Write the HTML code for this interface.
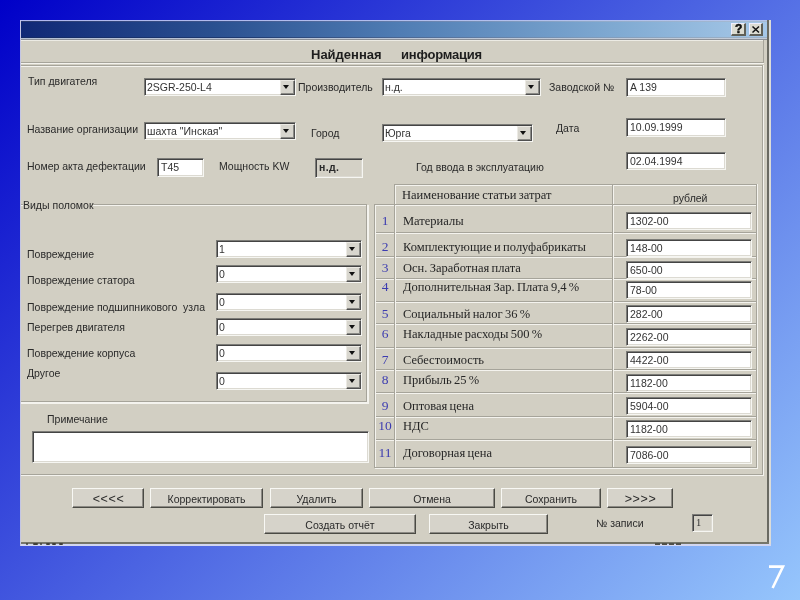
<!DOCTYPE html><html><head><meta charset="utf-8"><style>
*{margin:0;padding:0;box-sizing:border-box}
html,body{width:800px;height:600px;overflow:hidden}
body{position:relative;will-change:transform;background:linear-gradient(135deg,rgb(0,0,200),rgb(150,198,252));font-family:"Liberation Sans",sans-serif}
.bx{position:absolute}
.t{position:absolute;font-size:10.5px;line-height:12px;color:#2a2a2a;white-space:nowrap}
.s{position:absolute;font-family:"Liberation Serif",serif;font-size:12.5px;line-height:14px;color:#262626;white-space:nowrap;word-spacing:-0.8px}
.n{position:absolute;font-family:"Liberation Serif",serif;font-size:13.5px;line-height:14px;color:#3c3cb0;white-space:nowrap;text-align:center}
.tb{position:absolute;background:#fff;border-top:1px solid #7c7c78;border-left:1px solid #7c7c78;border-right:1px solid #f6f6f2;border-bottom:1px solid #f6f6f2;box-shadow:inset 1px 1px 0 #444, inset -1px -1px 0 #dcdad2}
.tb span{position:absolute;font-size:10.5px;line-height:12px;color:#333;white-space:nowrap}
.tb i{position:absolute;right:0;top:1px;bottom:0;width:15px;background:#d8d6ce;border-top:1px solid #eceae4;border-left:1px solid #eceae4;border-right:1px solid #505050;border-bottom:1px solid #505050;box-shadow:inset -1px -1px 0 #8a8a86}
.tb i:after{content:"";position:absolute;left:2px;top:4px;border-left:3.5px solid transparent;border-right:3.5px solid transparent;border-top:4px solid #111}
.btn{position:absolute;background:#d6d3ca;border-top:1px solid #f8f8f4;border-left:1px solid #f8f8f4;border-right:1px solid #4a4a44;border-bottom:1px solid #4a4a44;box-shadow:inset -1px -1px 0 #8c8a84}
.btn span{position:absolute;text-align:center;font-size:10.5px;line-height:12px;color:#2a2a2a;white-space:nowrap}
</style></head><body>
<div id="w" style="position:absolute;left:0;top:0;width:800px;height:600px">
<div class="bx" style="left:20px;top:20px;width:747px;height:522px;background:#d2cfc3;"></div>
<div class="bx" style="left:20px;top:20px;width:747px;height:1px;background:linear-gradient(90deg,#b0b8f0,#b4c4ec);"></div>
<div class="bx" style="left:20px;top:21px;width:747px;height:1px;background:linear-gradient(90deg,#2a3a70,#405890 30%,#8ea8c8 75%,#a8bcd4);"></div>
<div class="bx" style="left:20px;top:22px;width:747px;height:15px;background:linear-gradient(90deg,rgb(16,40,118) 0%,rgb(42,80,144) 26%,rgb(80,125,180) 51%,rgb(128,170,210) 80%,rgb(166,200,232) 100%);"></div>
<div class="bx" style="left:20px;top:37px;width:747px;height:1px;background:linear-gradient(90deg,#142a64,#1e3a70 30%,#7c98b8 75%,#a0b4c8);"></div>
<div class="bx" style="left:20px;top:38px;width:747px;height:1px;background:linear-gradient(90deg,#b4c0d4,#c4ccd8);"></div>
<div class="bx" style="left:20px;top:39px;width:747px;height:1px;background:#8c9098;"></div>
<div class="tbtn" style="position:absolute;left:731px;top:23px;width:15px;height:13px;background:#dcdcd2;border-right:2px solid #606058;border-bottom:2px solid #606058;border-top:1px solid #eef;border-left:1px solid #eef;"></div>
<div class="tbtn" style="position:absolute;left:749px;top:23px;width:14px;height:13px;background:#dcdcd2;border-right:2px solid #606058;border-bottom:2px solid #606058;border-top:1px solid #eef;border-left:1px solid #eef;"></div>
<div style="position:absolute;left:735px;top:23px;font-size:12px;line-height:12px;font-weight:bold;color:#111;-webkit-text-stroke:0.5px #111;">?</div>
<svg style="position:absolute;left:0;top:0" width="800" height="600"><path d="M752.5 26.5 L759 32.5 M759 26.5 L752.5 32.5" stroke="#111" stroke-width="1.5" fill="none"/></svg>
<div class="bx" style="left:767px;top:20px;width:2px;height:524px;background:#6a6a62;"></div>
<div class="bx" style="left:769px;top:20px;width:2px;height:526px;background:#dcdcd8;"></div>
<div class="bx" style="left:20px;top:40px;width:744px;height:1px;background:#ecebe4;"></div>
<div class="bx" style="left:20px;top:62px;width:743px;height:1px;background:#a6a49a;"></div>
<div class="bx" style="left:20px;top:63px;width:744px;height:1px;background:#f4f3ee;"></div>
<div class="bx" style="left:763px;top:40px;width:1px;height:23px;background:#a6a49a;"></div>
<div class="bx" style="left:20px;top:65px;width:743px;height:1px;background:#a6a49a;"></div>
<div class="bx" style="left:20px;top:66px;width:743px;height:1px;background:#f4f3ee;"></div>
<div class="bx" style="left:762px;top:65px;width:1px;height:410px;background:#a6a49a;"></div>
<div class="bx" style="left:763px;top:65px;width:1px;height:410px;background:#f4f3ee;"></div>
<div style="position:absolute;left:311px;top:48px;font-size:13px;font-weight:bold;line-height:14px;color:#1e1e1e;white-space:nowrap;letter-spacing:0px">Найденная</div>
<div style="position:absolute;left:401px;top:48px;font-size:13px;font-weight:bold;line-height:14px;color:#1e1e1e;white-space:nowrap;letter-spacing:-0.2px">информация</div>
<div class="t" style="left:28px;top:75px;">Тип двигателя</div>
<div class="tb" style="left:144px;top:78px;width:152px;height:18px;"><span style="left:2px;top:2px">2SGR-250-L4</span><i></i></div>
<div class="t" style="left:298px;top:81px;">Производитель</div>
<div class="tb" style="left:382px;top:78px;width:159px;height:18px;"><span style="left:2px;top:2px">н.д.</span><i></i></div>
<div class="t" style="left:549px;top:81px;">Заводской №</div>
<div class="tb" style="left:626px;top:78px;width:100px;height:19px;"><span style="left:3px;top:2px;">A 139</span></div>
<div class="t" style="left:27px;top:123px;">Название организации</div>
<div class="tb" style="left:144px;top:122px;width:152px;height:18px;"><span style="left:2px;top:2px">шахта "Инская"</span><i></i></div>
<div class="t" style="left:311px;top:127px;">Город</div>
<div class="tb" style="left:382px;top:124px;width:151px;height:18px;"><span style="left:2px;top:2px">Юрга</span><i></i></div>
<div class="t" style="left:556px;top:122px;">Дата</div>
<div class="tb" style="left:626px;top:118px;width:100px;height:19px;"><span style="left:3px;top:2px;">10.09.1999</span></div>
<div class="t" style="left:27px;top:160px;">Номер акта дефектации</div>
<div class="tb" style="left:157px;top:158px;width:47px;height:19px;"><span style="left:3px;top:2px;">T45</span></div>
<div class="t" style="left:219px;top:160px;">Мощность KW</div>
<div class="tb" style="left:315px;top:158px;width:48px;height:20px;background:#d4d1c6;"><span style="left:3px;top:2px;font-weight:bold;letter-spacing:0.4px;color:#2a2a2a">н.д.</span></div>
<div class="t" style="left:416px;top:161px;">Год ввода в эксплуатацию</div>
<div class="tb" style="left:626px;top:152px;width:100px;height:18px;"><span style="left:3px;top:2px;">02.04.1994</span></div>
<div class="t" style="left:23px;top:199px;">Виды поломок</div>
<div class="bx" style="left:93px;top:204px;width:273px;height:1px;background:#a6a49a;"></div>
<div class="bx" style="left:93px;top:205px;width:274px;height:1px;background:#f4f3ee;"></div>
<div class="bx" style="left:20px;top:204px;width:3px;height:1px;background:#a6a49a;"></div>
<div class="bx" style="left:20px;top:205px;width:3px;height:1px;background:#f4f3ee;"></div>
<div class="bx" style="left:366px;top:204px;width:1px;height:198px;background:#a6a49a;"></div>
<div class="bx" style="left:367px;top:205px;width:2px;height:197px;background:#f4f3ee;"></div>
<div class="bx" style="left:20px;top:401px;width:347px;height:1px;background:#a6a49a;"></div>
<div class="bx" style="left:20px;top:402px;width:349px;height:2px;background:#f4f3ee;"></div>
<div class="t" style="left:27px;top:248px;">Повреждение</div>
<div class="tb" style="left:216px;top:240px;width:146px;height:18px;"><span style="left:2px;top:2px">1</span><i></i></div>
<div class="t" style="left:27px;top:274px;">Повреждение статора</div>
<div class="tb" style="left:216px;top:265px;width:146px;height:18px;"><span style="left:2px;top:2px">0</span><i></i></div>
<div class="t" style="left:27px;top:301px;">Повреждение подшипникового&nbsp; узла</div>
<div class="tb" style="left:216px;top:293px;width:146px;height:18px;"><span style="left:2px;top:2px">0</span><i></i></div>
<div class="t" style="left:27px;top:321px;">Перегрев двигателя</div>
<div class="tb" style="left:216px;top:318px;width:146px;height:18px;"><span style="left:2px;top:2px">0</span><i></i></div>
<div class="t" style="left:27px;top:347px;">Повреждение корпуса</div>
<div class="tb" style="left:216px;top:344px;width:146px;height:18px;"><span style="left:2px;top:2px">0</span><i></i></div>
<div class="t" style="left:27px;top:367px;">Другое</div>
<div class="tb" style="left:216px;top:372px;width:146px;height:18px;"><span style="left:2px;top:2px">0</span><i></i></div>
<div class="t" style="left:47px;top:413px;">Примечание</div>
<div class="tb" style="left:32px;top:431px;width:337px;height:32px;"><span style="left:3px;top:2px;"></span></div>
<div class="bx" style="left:394px;top:184px;width:363px;height:1px;background:#a6a49a;"></div>
<div class="bx" style="left:395px;top:185px;width:362px;height:1px;background:#f4f3ee;"></div>
<div class="bx" style="left:394px;top:184px;width:1px;height:20px;background:#a6a49a;"></div>
<div class="bx" style="left:395px;top:185px;width:1px;height:19px;background:#f4f3ee;"></div>
<div class="bx" style="left:612px;top:184px;width:1px;height:20px;background:#a6a49a;"></div>
<div class="bx" style="left:613px;top:185px;width:1px;height:19px;background:#f4f3ee;"></div>
<div class="s" style="left:402px;top:188px;">Наименование статьи затрат</div>
<div class="t" style="left:673px;top:192px;">рублей</div>
<div class="bx" style="left:374px;top:204px;width:383px;height:1px;background:#a6a49a;"></div>
<div class="bx" style="left:375px;top:205px;width:382px;height:1px;background:#f4f3ee;"></div>
<div class="bx" style="left:374px;top:232px;width:383px;height:1px;background:#a6a49a;"></div>
<div class="bx" style="left:375px;top:233px;width:382px;height:1px;background:#f4f3ee;"></div>
<div class="bx" style="left:374px;top:256px;width:383px;height:1px;background:#a6a49a;"></div>
<div class="bx" style="left:375px;top:257px;width:382px;height:1px;background:#f4f3ee;"></div>
<div class="bx" style="left:374px;top:278px;width:383px;height:1px;background:#a6a49a;"></div>
<div class="bx" style="left:375px;top:279px;width:382px;height:1px;background:#f4f3ee;"></div>
<div class="bx" style="left:374px;top:301px;width:383px;height:1px;background:#a6a49a;"></div>
<div class="bx" style="left:375px;top:302px;width:382px;height:1px;background:#f4f3ee;"></div>
<div class="bx" style="left:374px;top:323px;width:383px;height:1px;background:#a6a49a;"></div>
<div class="bx" style="left:375px;top:324px;width:382px;height:1px;background:#f4f3ee;"></div>
<div class="bx" style="left:374px;top:347px;width:383px;height:1px;background:#a6a49a;"></div>
<div class="bx" style="left:375px;top:348px;width:382px;height:1px;background:#f4f3ee;"></div>
<div class="bx" style="left:374px;top:369px;width:383px;height:1px;background:#a6a49a;"></div>
<div class="bx" style="left:375px;top:370px;width:382px;height:1px;background:#f4f3ee;"></div>
<div class="bx" style="left:374px;top:392px;width:383px;height:1px;background:#a6a49a;"></div>
<div class="bx" style="left:375px;top:393px;width:382px;height:1px;background:#f4f3ee;"></div>
<div class="bx" style="left:374px;top:416px;width:383px;height:1px;background:#a6a49a;"></div>
<div class="bx" style="left:375px;top:417px;width:382px;height:1px;background:#f4f3ee;"></div>
<div class="bx" style="left:374px;top:439px;width:383px;height:1px;background:#a6a49a;"></div>
<div class="bx" style="left:375px;top:440px;width:382px;height:1px;background:#f4f3ee;"></div>
<div class="bx" style="left:374px;top:467px;width:383px;height:1px;background:#a6a49a;"></div>
<div class="bx" style="left:375px;top:468px;width:382px;height:1px;background:#f4f3ee;"></div>
<div class="bx" style="left:374px;top:204px;width:1px;height:263px;background:#a6a49a;"></div>
<div class="bx" style="left:375px;top:205px;width:1px;height:262px;background:#f4f3ee;"></div>
<div class="bx" style="left:394px;top:204px;width:1px;height:263px;background:#a6a49a;"></div>
<div class="bx" style="left:395px;top:205px;width:1px;height:262px;background:#f4f3ee;"></div>
<div class="bx" style="left:612px;top:204px;width:1px;height:263px;background:#a6a49a;"></div>
<div class="bx" style="left:613px;top:205px;width:1px;height:262px;background:#f4f3ee;"></div>
<div class="bx" style="left:756px;top:184px;width:1px;height:284px;background:#a6a49a;"></div>
<div class="bx" style="left:757px;top:184px;width:1px;height:285px;background:#f4f3ee;"></div>
<div class="n" style="left:375px;width:20px;top:214px;">1</div>
<div class="s" style="left:403px;top:214px;">Материалы</div>
<div class="tb" style="left:626px;top:212px;width:126px;height:18px;"><span style="left:3px;top:2px;">1302-00</span></div>
<div class="n" style="left:375px;width:20px;top:240px;">2</div>
<div class="s" style="left:403px;top:240px;">Комплектующие и полуфабрикаты</div>
<div class="tb" style="left:626px;top:239px;width:126px;height:18px;"><span style="left:3px;top:2px;">148-00</span></div>
<div class="n" style="left:375px;width:20px;top:261px;">3</div>
<div class="s" style="left:403px;top:261px;">Осн. Заработная плата</div>
<div class="tb" style="left:626px;top:261px;width:126px;height:18px;"><span style="left:3px;top:2px;">650-00</span></div>
<div class="n" style="left:375px;width:20px;top:280px;">4</div>
<div class="s" style="left:403px;top:280px;">Дополнительная Зар. Плата 9,4 %</div>
<div class="tb" style="left:626px;top:281px;width:126px;height:18px;"><span style="left:3px;top:2px;">78-00</span></div>
<div class="n" style="left:375px;width:20px;top:307px;">5</div>
<div class="s" style="left:403px;top:307px;">Социальный налог 36 %</div>
<div class="tb" style="left:626px;top:305px;width:126px;height:18px;"><span style="left:3px;top:2px;">282-00</span></div>
<div class="n" style="left:375px;width:20px;top:327px;">6</div>
<div class="s" style="left:403px;top:327px;">Накладные расходы 500 %</div>
<div class="tb" style="left:626px;top:328px;width:126px;height:18px;"><span style="left:3px;top:2px;">2262-00</span></div>
<div class="n" style="left:375px;width:20px;top:353px;">7</div>
<div class="s" style="left:403px;top:353px;">Себестоимость</div>
<div class="tb" style="left:626px;top:351px;width:126px;height:18px;"><span style="left:3px;top:2px;">4422-00</span></div>
<div class="n" style="left:375px;width:20px;top:373px;">8</div>
<div class="s" style="left:403px;top:373px;">Прибыль 25 %</div>
<div class="tb" style="left:626px;top:374px;width:126px;height:18px;"><span style="left:3px;top:2px;">1182-00</span></div>
<div class="n" style="left:375px;width:20px;top:399px;">9</div>
<div class="s" style="left:403px;top:399px;">Оптовая цена</div>
<div class="tb" style="left:626px;top:397px;width:126px;height:18px;"><span style="left:3px;top:2px;">5904-00</span></div>
<div class="n" style="left:375px;width:20px;top:419px;">10</div>
<div class="s" style="left:403px;top:419px;">НДС</div>
<div class="tb" style="left:626px;top:420px;width:126px;height:18px;"><span style="left:3px;top:2px;">1182-00</span></div>
<div class="n" style="left:375px;width:20px;top:446px;">11</div>
<div class="s" style="left:403px;top:446px;">Договорная цена</div>
<div class="tb" style="left:626px;top:446px;width:126px;height:18px;"><span style="left:3px;top:2px;">7086-00</span></div>
<div class="bx" style="left:20px;top:474px;width:743px;height:1px;background:#a6a49a;"></div>
<div class="bx" style="left:20px;top:475px;width:744px;height:1px;background:#f4f3ee;"></div>
<div class="btn" style="left:72px;top:488px;width:72px;height:20px;"><span style="left:0;right:0;top:4px;margin-left:1px"><span style="position:static;font-size:12.5px;letter-spacing:0.6px">&lt;&lt;&lt;&lt;</span></span></div>
<div class="btn" style="left:150px;top:488px;width:113px;height:20px;"><span style="left:0;right:0;top:4px;margin-left:0px">Корректировать</span></div>
<div class="btn" style="left:270px;top:488px;width:93px;height:20px;"><span style="left:0;right:0;top:4px;margin-left:0px">Удалить</span></div>
<div class="btn" style="left:369px;top:488px;width:126px;height:20px;"><span style="left:0;right:0;top:4px;margin-left:0px">Отмена</span></div>
<div class="btn" style="left:501px;top:488px;width:100px;height:20px;"><span style="left:0;right:0;top:4px;margin-left:0px">Сохранить</span></div>
<div class="btn" style="left:607px;top:488px;width:66px;height:20px;"><span style="left:0;right:0;top:4px;margin-left:1px"><span style="position:static;font-size:12.5px;letter-spacing:0.6px">&gt;&gt;&gt;&gt;</span></span></div>
<div class="btn" style="left:264px;top:514px;width:152px;height:20px;"><span style="left:0;right:0;top:4px;margin-left:0px">Создать отчёт</span></div>
<div class="btn" style="left:429px;top:514px;width:119px;height:20px;"><span style="left:0;right:0;top:4px;margin-left:0px">Закрыть</span></div>
<div class="t" style="left:596px;top:517px;">№ записи</div>
<div class="tb" style="left:692px;top:514px;width:21px;height:18px;background:#d4d1c6;"><span style="left:3px;top:2px;font-family:'Liberation Serif',serif">1</span></div>
<div class="bx" style="left:20px;top:542px;width:749px;height:2px;background:#76766a;"></div>
<div class="bx" style="left:20px;top:544px;width:751px;height:2px;background:#d2d6f0;"></div>
<div class="bx" style="left:26px;top:543px;width:2px;height:2px;background:#404038;border-radius:1px;"></div>
<div class="bx" style="left:33px;top:543px;width:5px;height:2px;background:#404038;border-radius:1px;"></div>
<div class="bx" style="left:40px;top:543px;width:2px;height:2px;background:#404038;border-radius:1px;"></div>
<div class="bx" style="left:46px;top:543px;width:4px;height:2px;background:#404038;border-radius:1px;"></div>
<div class="bx" style="left:52px;top:543px;width:4px;height:2px;background:#404038;border-radius:1px;"></div>
<div class="bx" style="left:59px;top:543px;width:4px;height:2px;background:#404038;border-radius:1px;"></div>
<div class="bx" style="left:655px;top:543px;width:5px;height:2px;background:#505048;"></div>
<div class="bx" style="left:662px;top:543px;width:5px;height:2px;background:#505048;"></div>
<div class="bx" style="left:669px;top:543px;width:5px;height:2px;background:#505048;"></div>
<div class="bx" style="left:676px;top:543px;width:5px;height:2px;background:#505048;"></div>
<div class="bx" style="left:20px;top:20px;width:1px;height:526px;background:#c4c6e4;"></div>
<svg style="position:absolute;left:0;top:0" width="800" height="600"><path d="M769 566.6 H783 L772.6 588" stroke="#fff" stroke-width="2.6" fill="none" stroke-linejoin="miter"/></svg>
</div></body></html>
